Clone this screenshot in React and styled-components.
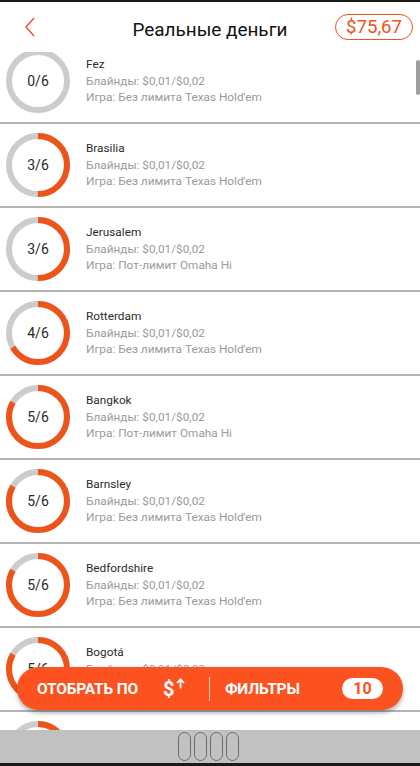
import React from "react";
import styled, { createGlobalStyle } from "styled-components";

const ORANGE = "#ee5319";
const PILL = "#fc521f";

const GlobalStyle = createGlobalStyle`
  html, body { margin: 0; padding: 0; background: #fff; }
  body { font-family: Roboto, "Noto Sans", Arial, sans-serif; overflow: hidden; }
  * { box-sizing: border-box; }
`;

const Screen = styled.div`
  width: 420px;
  height: 766px;
  display: flex;
  flex-direction: column;
  border-top: 2px solid #1a1a1a;
  border-bottom: 3px solid #1a1a1a;
  background: #fff;
  overflow: hidden;
`;

const Header = styled.header`
  height: 50px;
  flex: none;
  display: grid;
  grid-template-columns: 1fr auto 1fr;
  align-items: center;
  padding: 0 7px;
  position: relative;
  z-index: 2;
  background: #fff;
`;

const BackButton = styled.button`
  border: 0;
  background: none;
  padding: 0;
  margin-left: 18px;
  width: 10px;
  height: 20px;
  display: flex;
  align-items: center;
  justify-self: start;
`;

const Title = styled.h1`
  margin: 4px 0 0;
  font-size: 18.9px;
  font-weight: 400;
  color: #111;
`;

const Balance = styled.div`
  justify-self: end;
  height: 26px;
  padding: 0 10px;
  border: 1.5px solid ${ORANGE};
  border-radius: 13px;
  color: ${ORANGE};
  font-size: 18.6px;
  display: flex;
  align-items: center;
  line-height: 1;
`;

const ListArea = styled.div`
  flex: 1;
  position: relative;
  overflow: hidden;
`;

const ListInner = styled.div`
  margin-top: -12px;
`;

const Row = styled.div`
  height: 84px;
  display: flex;
  align-items: center;
  gap: 16px;
  padding-left: 6px;
  border-bottom: 2px solid #b4b4b4;
`;

const RingWrap = styled.div`
  position: relative;
  width: 64px;
  height: 64px;
  flex: none;
  display: flex;
  align-items: center;
  justify-content: center;
`;

const RingLabel = styled.span`
  position: relative;
  font-size: 14px;
  color: #2a2a2a;
`;

const RingSvg = styled.svg`
  position: absolute;
  inset: 0;
`;

const Info = styled.div`
  display: flex;
  flex-direction: column;
  font-size: 11.8px;
  line-height: 16.5px;
`;

const Name = styled.span`
  color: #2b2b2b;
`;

const Detail = styled.span`
  color: #9a9a9a;
`;

const ScrollThumb = styled.div`
  position: absolute;
  right: 0;
  top: 8px;
  width: 4px;
  height: 35px;
  border-radius: 2px;
  background: #9e9e9e;
`;

const SortBar = styled.div`
  position: absolute;
  left: 17px;
  right: 17px;
  bottom: 20px;
  height: 43px;
  border-radius: 22px;
  background: ${PILL};
  box-shadow: 0 3px 4px rgba(0, 0, 0, 0.3);
  display: flex;
  align-items: center;
  padding: 0 20px;
  color: #fff;
  font-weight: 700;
  font-size: 15.5px;
`;

const SortLabel = styled.span`
  letter-spacing: -0.2px;
`;

const SortIcon = styled.span`
  margin-left: 25px;
  font-size: 20px;
  display: flex;
  align-items: flex-start;
  gap: 2px;
  width: 26px;
`;

const Divider = styled.span`
  width: 1px;
  height: 24px;
  background: rgba(255, 255, 255, 0.7);
  margin: 0 15px 0 20px;
`;

const Badge = styled.span`
  margin-left: auto;
  width: 41px;
  height: 21px;
  border-radius: 11px;
  background: #fff;
  color: ${PILL};
  font-size: 16px;
  display: flex;
  align-items: center;
  justify-content: center;
`;

const NavBar = styled.div`
  height: 33px;
  flex: none;
  background: #c1c1c1;
  display: flex;
  justify-content: center;
  align-items: center;
  gap: 3px;
  padding-right: 4px;
`;

const NavPill = styled.span`
  width: 13px;
  height: 29px;
  border: 1.5px solid #6a6a6a;
  border-radius: 7px;
`;

function Ring({ taken }) {
  const r = 29;
  const c = 2 * Math.PI * r;
  const frac = taken / 6;
  return (
    <RingWrap>
      <RingSvg width="64" height="64" viewBox="0 0 64 64">
        <circle cx="32" cy="32" r={r} fill="none" stroke="#cccccc" strokeWidth="6" />
        {frac > 0 && (
          <circle
            cx="32"
            cy="32"
            r={r}
            fill="none"
            stroke={ORANGE}
            strokeWidth="6"
            strokeDasharray={`${c * frac} ${c}`}
            transform="rotate(-90 32 32)"
          />
        )}
      </RingSvg>
      <RingLabel>{taken}/6</RingLabel>
    </RingWrap>
  );
}

const NL = "Без лимита Texas Hold'em";
const PL = "Пот-лимит Omaha Hi";

const tables = [
  { name: "Fez", taken: 0, game: NL },
  { name: "Brasilia", taken: 3, game: NL },
  { name: "Jerusalem", taken: 3, game: PL },
  { name: "Rotterdam", taken: 4, game: NL },
  { name: "Bangkok", taken: 5, game: PL },
  { name: "Barnsley", taken: 5, game: NL },
  { name: "Bedfordshire", taken: 5, game: NL },
  { name: "Bogotá", taken: 5, game: NL },
  { name: "Cairo", taken: 5, game: NL },
];

export default function App() {
  return (
    <>
      <GlobalStyle />
      <Screen>
        <Header>
          <BackButton aria-label="back">
            <svg width="10" height="20" viewBox="0 0 10 20">
              <polyline points="9,1 1,10 9,19" fill="none" stroke={ORANGE} strokeWidth="1.4" />
            </svg>
          </BackButton>
          <Title>Реальные деньги</Title>
          <Balance>$75,67</Balance>
        </Header>
        <ListArea>
          <ListInner>
            {tables.map((t) => (
              <Row key={t.name}>
                <Ring taken={t.taken} />
                <Info>
                  <Name>{t.name}</Name>
                  <Detail>Блайнды: $0,01/$0,02</Detail>
                  <Detail>Игра: {t.game}</Detail>
                </Info>
              </Row>
            ))}
          </ListInner>
          <ScrollThumb />
          <SortBar>
            <SortLabel>ОТОБРАТЬ ПО</SortLabel>
            <SortIcon>
              $
              <svg width="9" height="11" viewBox="0 0 9 11" style={{ marginTop: 1 }}>
                <path d="M4.5 10.5V1.5M1 5L4.5 1.3L8 5" fill="none" stroke="#fff" strokeWidth="1.8" />
              </svg>
            </SortIcon>
            <Divider />
            <SortLabel>ФИЛЬТРЫ</SortLabel>
            <Badge>10</Badge>
          </SortBar>
        </ListArea>
        <NavBar>
          <NavPill />
          <NavPill />
          <NavPill />
          <NavPill />
        </NavBar>
      </Screen>
    </>
  );
}
